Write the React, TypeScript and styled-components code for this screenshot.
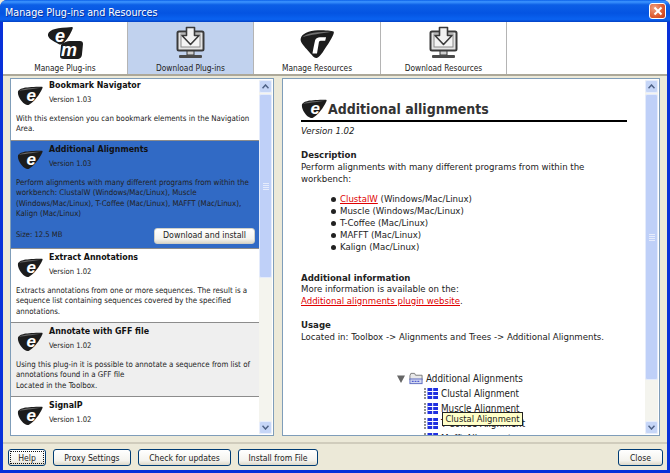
import { createGlobalStyle, styled } from "styled-components";

const GlobalStyle = createGlobalStyle`
  html, body { margin: 0; padding: 0; background: #ece9d8; }
  * { box-sizing: border-box; }
  body {
    font-family: "DejaVu Sans Condensed", "DejaVu Sans", Verdana, sans-serif;
    font-stretch: condensed;
    font-size: 9px;
    color: #222;
  }
`;

const Win = styled.div`
  width: 670px;
  height: 473px;
  display: flex;
  flex-direction: column;
  overflow: hidden;
  background: #0831d9;
  border-radius: 7px 7px 0 0;
`;
const TitleBar = styled.div`
  height: 22px;
  flex: none;
  display: flex;
  align-items: center;
  justify-content: space-between;
  padding: 2px 4px 0 5px;
  background: linear-gradient(180deg, #0a5fe8 0%, #3d95ff 8%, #0c5fe6 22%, #0454e2 60%, #0a62f0 88%, #0340c4 100%);
  color: #fff;
  font-size: 10.700px;
  text-shadow: 1px 1px 0 #0a2f98;
`;
const CloseBox = styled.div`
  width: 17px;
  height: 16px;
  border: 1px solid #fff;
  border-radius: 3px;
  background: radial-gradient(circle at 30% 30%, #f0a080, #dc5a30 60%, #c23a18);
  display: flex;
  align-items: center;
  justify-content: center;
  margin-top: -2px;
`;
const Client = styled.div`
  flex: 1;
  min-height: 0;
  margin: 0 3px 3px 3px;
  background: #ece9d8;
  display: flex;
  flex-direction: column;
`;
const TabRow = styled.div`
  height: 54px;
  flex: none;
  display: flex;
  background: #fff;
  border-bottom: 2px solid #aca899;
`;
const Tab = styled.div<{ $active?: boolean; $w: number }>`
  width: ${(p) => p.$w}px;
  display: flex;
  flex-direction: column;
  align-items: center;
  justify-content: flex-end;
  border-right: 1px solid #b4b4b4;
  background: ${(p) => (p.$active ? "#c1d2ee" : "#fff")};
  font-size: 8.300px;
  line-height: 11px;
  color: #222;
  gap: 4px;
`;
const Panels = styled.div`
  flex: 1;
  min-height: 0;
  display: flex;
  gap: 8px;
  padding: 2px 7px 7px 7px;
`;
const Panel = styled.div<{ $w: number }>`
  width: ${(p) => p.$w}px;
  height: 358px;
  display: flex;
  background: #fff;
  border: 1px solid #7f9db9;
  overflow: hidden;
`;
const ListCol = styled.div`
  flex: 1;
  min-width: 0;
  overflow: hidden;
`;
const Item = styled.div<{ $kind?: "sel" | "alt"; $h: number }>`
  height: ${(p) => p.$h}px;
  overflow: hidden;
  padding: 0 2px 0 5px;
  border-bottom: 1px solid #8c8c8c;
  background: ${(p) => (p.$kind === "sel" ? "#316ac5" : p.$kind === "alt" ? "#efefef" : "#fff")};
  line-height: 10.400px;
  font-size: 7.850px;
  color: #222;
  &:first-child {
    margin-top: -2px;
  }
`;
const ItemHead = styled.div`
  height: 37px;
  display: flex;
  gap: 6px;
  padding: 2px 0 0 1px;
  align-items: flex-start;
`;
const LogoSlot = styled.div`
  margin-top: 7px;
  flex: none;
`;
const ItemTitle = styled.div`
  font-weight: 700;
  font-size: 8.800px;
  color: #111;
  line-height: 12px;
`;
const ItemVersion = styled.div`
  font-size: 7.600px;
  margin-top: 4px;
  line-height: 10px;
`;
const ItemBottom = styled.div`
  display: flex;
  justify-content: space-between;
  align-items: center;
  margin-top: 8px;
  font-size: 7.600px;
  padding-right: 2px;
`;
const XPButton = styled.div<{ $w: number; $focus?: boolean }>`
  width: ${(p) => p.$w}px;
  height: 17px;
  display: flex;
  align-items: center;
  justify-content: center;
  border: 1px solid #003c74;
  border-radius: 3px;
  background: linear-gradient(180deg, #fff 0%, #f4f3ee 70%, #dcd8ca 100%);
  font-size: 8.600px;
  color: #222;
  outline: ${(p) => (p.$focus ? "1px dotted #111" : "none")};
  outline-offset: -3px;
`;
const InstallButton = styled(XPButton)`
  border-color: #d0d0c8;
  height: 16px;
  font-size: 8.800px;
`;
const ScrollBar = styled.div`
  width: 13px;
  flex: none;
  margin: 1px;
  margin-left: 0;
  display: flex;
  flex-direction: column;
  background: #f4f4ee;
`;
const ScrollBtn = styled.div`
  height: 13px;
  flex: none;
  display: flex;
  align-items: center;
  justify-content: center;
  background: #c6d6f7;
  border: 1px solid #e8eefc;
  border-radius: 2px;
`;
const Thumb = styled.div<{ $h: number }>`
  height: ${(p) => p.$h}px;
  flex: none;
  margin-top: 1px;
  background: #bfd0f8;
  border: 1px solid #e4ebfb;
  border-radius: 2px;
  display: flex;
  flex-direction: column;
  align-items: center;
  justify-content: center;
  gap: 1px;
`;
const Grip = styled.i`
  display: block;
  width: 6px;
  height: 1px;
  background: #e6ecfc;
`;
const Spacer = styled.div`
  flex: 1;
`;
const Doc = styled.div`
  flex: 1;
  min-width: 0;
  position: relative;
  overflow: hidden;
  padding: 16px 0 0 18px;
  font-size: 9.550px;
  line-height: 12px;
  color: #222;
`;
const DocHead = styled.div`
  width: 326px;
  height: 27px;
  display: flex;
  align-items: flex-end;
  gap: 1px;
  border-bottom: 2px solid #000;
  padding-bottom: 2px;
`;
const DocTitle = styled.div`
  font-size: 14px;
  line-height: 17px;
  font-weight: 700;
  color: #333;
`;
const DocVersion = styled.div`
  font-style: italic;
  margin-top: 3px;
`;
const SectionTitle = styled.div<{ $top: number }>`
  font-weight: 700;
  color: #222;
  margin-top: ${(p) => p.$top}px;
`;
const InfoLine = styled.div`
  margin-top: -1px;
`;
const Bullets = styled.ul`
  list-style: none;
  margin: 8px 0 0 0;
  padding: 0 0 0 30px;
`;
const Bullet = styled.li`
  display: flex;
  align-items: center;
  gap: 4px;
  &::before {
    content: "";
    width: 5px;
    height: 5px;
    border-radius: 50%;
    background: #222;
  }
`;
const RedLink = styled.span`
  color: #e00000;
  text-decoration: underline;
`;
const Tree = styled.div`
  margin: 28px 0 0 96px;
`;
const TreeRow = styled.div<{ $child?: boolean }>`
  height: 15px;
  display: flex;
  align-items: center;
  gap: 3px;
  padding-left: ${(p) => (p.$child ? 27 : 0)}px;
  font-size: 9.800px;
`;
const Tooltip = styled.div`
  position: absolute;
  left: 159px;
  top: 333px;
  height: 14px;
  width: 81px;
  padding: 0 2px;
  display: flex;
  align-items: center;
  justify-content: center;
  background: #ffffc8;
  border: 1px solid #222;
  font-size: 9.300px;
`;
const Footer = styled.div`
  height: 28px;
  flex: none;
  display: flex;
  gap: 7px;
  align-items: flex-start;
  padding: 5px 4px 0 5px;
  border-top: 2px solid #d0ccbc;
  margin-top: -1px;
`;

const EIcon = ({ w = 26 }: { w?: number }) => (
  <svg width={w} height={w * 0.75} viewBox="0 0 26 19.500" style={{ display: "block", flex: "none" }}>
    <path d="M1 5.500C3 2 8 1 25 .8c.8 0 .8.8.3 1.600-3 6.500-8 13-13 16.200-1.500 1-3 .4-4.500-.6C4 15.500 .2 9.500 1 5.500z" fill="#1c1c1c" />
    <path d="M2 5C5 2.500 12 2 24 1.800 14 3.500 7 4 2 5z" fill="#666" />
    <text x="9.500" y="15" fontFamily="'Liberation Sans', sans-serif" fontSize="17" fontWeight="700" fontStyle="italic" fill="#fff">e</text>
  </svg>
);

const EmIcon = () => (
  <svg width="37" height="33" viewBox="0 0 37 33">
    <path d="M1 8C3 3 10 2 25 1c1 0 1 1 .5 2-2 5-6 12-10 15-1 1-3 .5-4 0C6 15 0 12 1 8z" fill="#1c1c1c" />
    <text x="8" y="16" fontFamily="'Liberation Sans', sans-serif" fontSize="18" fontWeight="700" fontStyle="italic" fill="#fff">e</text>
    <path d="M14 19c3-3 6-4 9-4h10c2 0 3 1 3 3l-1 10c0 3-2 5-5 5H17c-3 0-4-1-4-3 0-3 1-8 1-11z" fill="#1c1c1c" />
    <text x="14" y="30" fontFamily="'Liberation Sans', sans-serif" fontSize="18" fontWeight="700" fontStyle="italic" fill="#fff">m</text>
  </svg>
);

const RIcon = () => (
  <svg width="38" height="30" viewBox="0 0 38 33">
    <path d="M1 11C2 5 10 2 20 1.500 27 1 37 2 37.500 3c.5 2-3 9-8 16-4 6-7 12-11 13-3 .5-7-6-11-10C4 18 .5 14 1 11z" fill="#1c1c1c" />
    <path d="M3 9C8 4 20 3 35 3 24 5 12 6 3 9z" fill="#707070" />
    <path d="M14 27c1-6 2-11 3-15 1-2 3-3 5-3h7l-1 4h-5c-1 0-2 1-2 2l-2 12z" fill="#fff" />
  </svg>
);

const DownloadIcon = () => (
  <svg width="29" height="33" viewBox="0 0 29 33">
    <rect x="1.500" y="5.500" width="26" height="19" rx="1.500" fill="#e4e4e4" stroke="#3a3a3a" strokeWidth="2" />
    <rect x="5" y="8" width="19" height="13" fill="#f4f4f4" stroke="#8a8a8a" />
    <path d="M10.500 1.500h8v8h4.500l-8.500 9-8.500-9h4.500z" fill="#f2f2f2" stroke="#3a3a3a" strokeWidth="1.600" strokeLinejoin="round" />
    <rect x="11" y="25" width="7" height="4" fill="#cfcfcf" stroke="#3a3a3a" />
    <rect x="3" y="29" width="23" height="3" rx="1" fill="#4a4a4a" />
  </svg>
);

const Arrow = ({ up }: { up?: boolean }) => (
  <svg width="7" height="5" viewBox="0 0 7 5">
    <path d={up ? "M.5 4.200L3.500 1l3 3.200" : "M.5 .8L3.500 4l3-3.200"} fill="none" stroke="#4d6185" strokeWidth="1.500" />
  </svg>
);

const AlignIcon = () => (
  <svg width="14" height="11" viewBox="0 0 14 11" style={{ flex: "none" }}>
    <path d="M0 1h2M0 4h2M0 7h2M0 10h2" stroke="#222" strokeWidth="1.200" />
    <rect x="3.500" y="0" width="10.500" height="11" fill="#1f2fe0" />
    <path d="M3.500 3.500h10.500M3.500 7.500h10.500M8.700 0v11" stroke="#fff" strokeWidth="1" />
  </svg>
);

const FolderIcon = () => (
  <svg width="14" height="13" viewBox="0 0 15 13" style={{ flex: "none" }}>
    <path d="M1 3.500 2 1h4l1 2h7v5H1z" fill="#e8e8e8" stroke="#777" />
    <rect x="1" y="7" width="13" height="5" fill="#d5d9f0" stroke="#5a6ac0" />
    <path d="M3 9.500h9" stroke="#2030c8" strokeDasharray="2 1" />
  </svg>
);

const Triangle = () => (
  <svg width="8" height="8" viewBox="0 0 8 8" style={{ flex: "none", marginRight: 1 }}>
    <path d="M0 .5h8L4 8z" fill="#666" />
  </svg>
);

const Scroll = ({ thumb }: { thumb: number }) => (
  <ScrollBar>
    <ScrollBtn><Arrow up /></ScrollBtn>
    <Thumb $h={thumb}><Grip /><Grip /><Grip /><Grip /></Thumb>
    <Spacer />
    <ScrollBtn><Arrow /></ScrollBtn>
  </ScrollBar>
);

const Head = ({ title, version }: { title: string; version: string }) => (
  <ItemHead>
    <LogoSlot><EIcon /></LogoSlot>
    <div>
      <ItemTitle>{title}</ItemTitle>
      <ItemVersion>Version {version}</ItemVersion>
    </div>
  </ItemHead>
);

const tabs = [
  { label: "Manage Plug-ins", icon: <EmIcon />, w: 125 },
  { label: "Download Plug-ins", icon: <DownloadIcon />, w: 126, active: true },
  { label: "Manage Resources", icon: <RIcon />, w: 127 },
  { label: "Download Resources", icon: <DownloadIcon />, w: 126 },
];

const App = () => (
  <>
    <GlobalStyle />
    <Win>
      <TitleBar>
        <span>Manage Plug-ins and Resources</span>
        <CloseBox>
          <svg width="10" height="10" viewBox="0 0 10 10">
            <path d="M1.500 1.500l7 7M8.500 1.500l-7 7" stroke="#fff" strokeWidth="2" />
          </svg>
        </CloseBox>
      </TitleBar>
      <Client>
        <TabRow>
          {tabs.map((t) => (
            <Tab key={t.label} $active={t.active} $w={t.w}>
              {t.icon}
              <span>{t.label}</span>
            </Tab>
          ))}
        </TabRow>
        <Panels>
          <Panel $w={264}>
            <ListCol>
              <Item $h={64}>
                <Head title="Bookmark Navigator" version="1.03" />
                With this extension you can bookmark elements in the Navigation Area.
              </Item>
              <Item $h={108} $kind="sel">
                <Head title="Additional Alignments" version="1.03" />
                Perform alignments with many different programs from within the workbench: ClustalW (Windows/Mac/Linux), Muscle (Windows/Mac/Linux), T-Coffee (Mac/Linux), MAFFT (Mac/Linux), Kalign (Mac/Linux)
                <ItemBottom>
                  <span>Size: 12.5 MB</span>
                  <InstallButton $w={101}>Download and install</InstallButton>
                </ItemBottom>
              </Item>
              <Item $h={74}>
                <Head title="Extract Annotations" version="1.02" />
                Extracts annotations from one or more sequences. The result is a sequence list containing sequences covered by the specified annotations.
              </Item>
              <Item $h={74} $kind="alt">
                <Head title="Annotate with GFF file" version="1.02" />
                Using this plug-in it is possible to annotate a sequence from list of annotations found in a GFF file
                <br />
                Located in the Toolbox.
              </Item>
              <Item $h={60}>
                <Head title="SignalP" version="1.02" />
              </Item>
            </ListCol>
            <Scroll thumb={184} />
          </Panel>
          <Panel $w={378}>
            <Doc>
              <DocHead>
                <EIcon />
                <DocTitle>Additional allignments</DocTitle>
              </DocHead>
              <DocVersion>Version 1.02</DocVersion>
              <SectionTitle $top={12}>Description</SectionTitle>
              <div>
                Perform alignments with many different programs from within the
                <br />
                workbench:
              </div>
              <Bullets>
                <Bullet><span><RedLink>ClustalW</RedLink> (Windows/Mac/Linux)</span></Bullet>
                <Bullet>Muscle (Windows/Mac/Linux)</Bullet>
                <Bullet>T-Coffee (Mac/Linux)</Bullet>
                <Bullet>MAFFT (Mac/Linux)</Bullet>
                <Bullet>Kalign (Mac/Linux)</Bullet>
              </Bullets>
              <SectionTitle $top={19}>Additional information</SectionTitle>
              <InfoLine>More information is available on the:</InfoLine>
              <div><RedLink>Additional alignments plugin website</RedLink>.</div>
              <SectionTitle $top={12}>Usage</SectionTitle>
              <div>Located in: Toolbox -&gt; Alignments and Trees -&gt; Additional Alignments.</div>
              <Tree>
                <TreeRow><Triangle /><FolderIcon />Additional Alignments</TreeRow>
                <TreeRow $child><AlignIcon />Clustal Alignment</TreeRow>
                <TreeRow $child><AlignIcon />Muscle Alignment</TreeRow>
                <TreeRow $child><AlignIcon />T-Coffee Alignment</TreeRow>
                <TreeRow $child><AlignIcon />Mafft Alignment</TreeRow>
              </Tree>
              <Tooltip>Clustal Alignment</Tooltip>
            </Doc>
            <Scroll thumb={286} />
          </Panel>
        </Panels>
        <Footer>
          <XPButton $w={38} $focus>Help</XPButton>
          <XPButton $w={78}>Proxy Settings</XPButton>
          <XPButton $w={93}>Check for updates</XPButton>
          <XPButton $w={80}>Install from File</XPButton>
          <Spacer />
          <XPButton $w={45}>Close</XPButton>
        </Footer>
      </Client>
    </Win>
  </>
);

export default App;
